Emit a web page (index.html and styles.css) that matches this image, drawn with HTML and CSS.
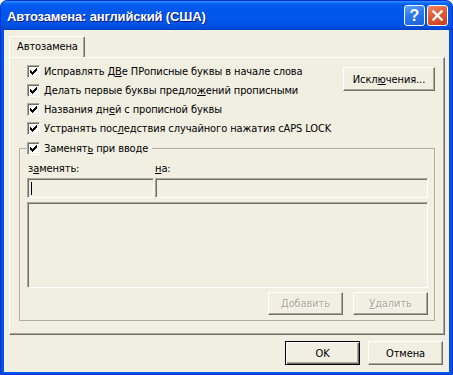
FILE: index.html
```html
<!DOCTYPE html>
<html lang="ru">
<head>
<meta charset="utf-8">
<title>Автозамена</title>
<link rel="stylesheet" href="styles.css">
</head>
<body>
<div class="window">
  <div class="titlebar">
    <span class="title">Автозамена: английский (США)</span>
    <div class="caps">
      <span class="capbtn help">?</span>
      <span class="capbtn close"><svg width="13" height="13" viewBox="0 0 13 13"><path d="M2.5 2.5 L10.5 10.5 M10.5 2.5 L2.5 10.5" stroke="#fff" stroke-width="2.4" stroke-linecap="square"/></svg></span>
    </div>
  </div>
  <div class="client">
    <div class="tabs"><div class="tab">Автозамена</div></div>
    <div class="panel">
      <div class="top">
        <div class="opts">
          <div class="row"><span class="cb"><svg class="chk" width="7" height="7" viewBox="0 0 7 7"><path d="M6 0h1v3h-1zM5 1h1v3h-1zM4 2h1v3h-1zM3 3h1v3h-1zM2 4h1v3h-1zM1 3h1v3h-1zM0 2h1v3h-1z"/></svg></span><span>Исправлять Д<u>В</u>е ПРописные буквы в начале слова</span></div>
          <div class="row"><span class="cb"><svg class="chk" width="7" height="7" viewBox="0 0 7 7"><path d="M6 0h1v3h-1zM5 1h1v3h-1zM4 2h1v3h-1zM3 3h1v3h-1zM2 4h1v3h-1zM1 3h1v3h-1zM0 2h1v3h-1z"/></svg></span><span>Делать первые буквы предло<u>ж</u>ений прописными</span></div>
          <div class="row"><span class="cb"><svg class="chk" width="7" height="7" viewBox="0 0 7 7"><path d="M6 0h1v3h-1zM5 1h1v3h-1zM4 2h1v3h-1zM3 3h1v3h-1zM2 4h1v3h-1zM1 3h1v3h-1zM0 2h1v3h-1z"/></svg></span><span>Названия дн<u>е</u>й с прописной буквы</span></div>
          <div class="row"><span class="cb"><svg class="chk" width="7" height="7" viewBox="0 0 7 7"><path d="M6 0h1v3h-1zM5 1h1v3h-1zM4 2h1v3h-1zM3 3h1v3h-1zM2 4h1v3h-1zM1 3h1v3h-1zM0 2h1v3h-1z"/></svg></span><span>Устранять пос<u>л</u>едствия случайного нажатия cAPS LOCK</span></div>
        </div>
        <button class="btn exc" type="button">Искл<u>ю</u>чения...</button>
      </div>
      <fieldset class="group">
        <legend class="row legend"><span class="cb"><svg class="chk" width="7" height="7" viewBox="0 0 7 7"><path d="M6 0h1v3h-1zM5 1h1v3h-1zM4 2h1v3h-1zM3 3h1v3h-1zM2 4h1v3h-1zM1 3h1v3h-1zM0 2h1v3h-1z"/></svg></span><span>Заменят<u>ь</u> при вводе</span></legend>
        <div class="labels"><span class="lab1">з<u>а</u>менять:</span><span><u>н</u>а:</span></div>
        <div class="fields"><div class="edit e1"><span class="caret"></span></div><div class="edit e2"></div></div>
        <div class="edit list"></div>
        <div class="actions">
          <button class="btn small" type="button" disabled><u>Д</u>обавить</button>
          <button class="btn small" type="button" disabled><u>У</u>далить</button>
        </div>
      </fieldset>
    </div>
    <div class="footer">
      <button class="btn def" type="button">OK</button>
      <button class="btn" type="button">Отмена</button>
    </div>
  </div>
</div>
</body>
</html>
```
FILE: styles.css
```css
html, body {
  margin: 0;
  padding: 0;
  background: #ffffff;
}
body {
  width: 453px;
  height: 375px;
  overflow: hidden;
  font-family: "DejaVu Sans Condensed", "DejaVu Sans", sans-serif;
  font-size: 11px;
  letter-spacing: -0.1px;
  color: #000;
}
.window {
  box-sizing: border-box;
  width: 453px;
  height: 375px;
  display: flex;
  flex-direction: column;
  border: 1px solid #0831D9;
  border-radius: 7px 7px 0 0;
  background: #0055E6;
  overflow: hidden;
}
.titlebar {
  height: 29px;
  flex: none;
  display: flex;
  align-items: center;
  justify-content: space-between;
  padding: 0 4px 0 6px;
  background: linear-gradient(180deg, #3D95FF 0px, #0B6BF5 2px, #0058EE 5px, #0056EB 14px, #0055E9 20px, #0051E3 25px, #0046D0 28px, #003DC0 29px);
  border-radius: 6px 6px 0 0;
}
.title {
  font-family: "Liberation Sans", sans-serif;
  font-weight: bold;
  font-size: 13px;
  color: #fff;
  text-shadow: 1px 1px 0 #0A1883;
  padding-top: 2px;
  letter-spacing: -0.15px;
}
.caps {
  display: flex;
  gap: 2px;
}
.capbtn {
  box-sizing: border-box;
  width: 21px;
  height: 21px;
  border: 1px solid #fff;
  border-radius: 3px;
  display: flex;
  align-items: center;
  justify-content: center;
}
.help {
  background: linear-gradient(160deg, #5AA3FF 0%, #2D78F0 45%, #1B5FDB 100%);
  color: #fff;
  font-family: "Liberation Sans", sans-serif;
  font-weight: bold;
  font-size: 16px;
  line-height: 19px;
  letter-spacing: 0;
}
.close {
  background: linear-gradient(160deg, #F08A68 0%, #E15A33 45%, #C8401C 100%);
}
.close svg { display: block; }
.client {
  flex: 1;
  margin: 0 3px 2px 3px;
  background: #F1EFE2;
  padding: 6px 4px 0 5px;
  display: flex;
  flex-direction: column;
}
.tabs {
  display: flex;
  height: 21px;
}
.tab {
  box-sizing: border-box;
  width: 76px;
  height: 21px;
  border-top: 1px solid #fff;
  border-left: 1px solid #fff;
  border-right: 1px solid #716F64;
  box-shadow: inset -1px 0 0 #ACA899;
  padding-left: 7px;
  line-height: 19px;
  border-radius: 2px 2px 0 0;
}
.panel {
  box-sizing: border-box;
  height: 278px;
  border-top: 1px solid #fff;
  border-left: 1px solid #fff;
  border-right: 1px solid #716F64;
  border-bottom: 1px solid #716F64;
  box-shadow: inset -1px -1px 0 #ACA899;
  padding: 4px 9px 0 9px;
  display: flex;
  flex-direction: column;
}
.top {
  display: flex;
  justify-content: space-between;
  align-items: flex-start;
}
.opts {
  padding-left: 8px;
  display: flex;
  flex-direction: column;
}
.row {
  height: 19px;
  display: flex;
  align-items: center;
  gap: 4px;
  white-space: nowrap;
}
.cb {
  box-sizing: border-box;
  width: 13px;
  height: 13px;
  flex: none;
  background: #fff;
  border: 1px solid;
  border-color: #ACA899 #fff #fff #ACA899;
  box-shadow: inset 1px 1px 0 #716F64, inset -1px -1px 0 #F1EFE2;
}
.chk {
  display: block;
  margin: 2px 0 0 2px;
  fill: #000;
  shape-rendering: crispEdges;
}
.btn {
  box-sizing: border-box;
  width: 75px;
  height: 24px;
  margin: 0;
  padding: 0;
  font: inherit;
  letter-spacing: inherit;
  color: #000;
  background: #F1EFE2;
  border: 1px solid;
  border-color: #fff #716F64 #716F64 #fff;
  box-shadow: inset -1px -1px 0 #ACA899;
  border-radius: 0;
}
.exc {
  width: 92px;
  margin-top: 5px;
}
.group {
  margin: 0;
  padding: 0 6px 5px 7px;
  border: 1px solid #B3B09F;
  min-inline-size: 0;
}
.legend {
  padding: 0 4px 0 0;
  margin: 0;
  height: 20px;
}
.labels {
  display: flex;
  margin-top: 4px;
  height: 14px;
  line-height: 14px;
}
.lab1 {
  width: 127px;
  padding-left: 1px;
}
.fields {
  display: flex;
  gap: 1px;
  margin-top: 2px;
}
.edit {
  box-sizing: border-box;
  height: 20px;
  border: 1px solid;
  border-color: #ACA899 #fff #fff #ACA899;
  box-shadow: inset 1px 1px 0 #716F64;
  background: #F1EFE2;
}
.e1 {
  width: 127px;
  padding: 3px 0 0 3px;
}
.e2 {
  flex: 1;
}
.caret {
  display: block;
  width: 1px;
  height: 13px;
  background: #000;
}
.list {
  height: 86px;
  margin-top: 4px;
}
.actions {
  display: flex;
  justify-content: flex-end;
  gap: 10px;
  margin-top: 4px;
}
.small {
  height: 23px;
}
.btn:disabled {
  color: #ACA899;
  text-shadow: 1px 1px 0 #fff;
}
.footer {
  display: flex;
  justify-content: flex-end;
  gap: 8px;
  margin-top: 6px;
  padding-right: 2px;
}
.def {
  border: 1px solid #000;
  box-shadow: inset 1px 1px 0 #fff, inset -1px -1px 0 #716F64, inset -2px -2px 0 #ACA899;
}
```
